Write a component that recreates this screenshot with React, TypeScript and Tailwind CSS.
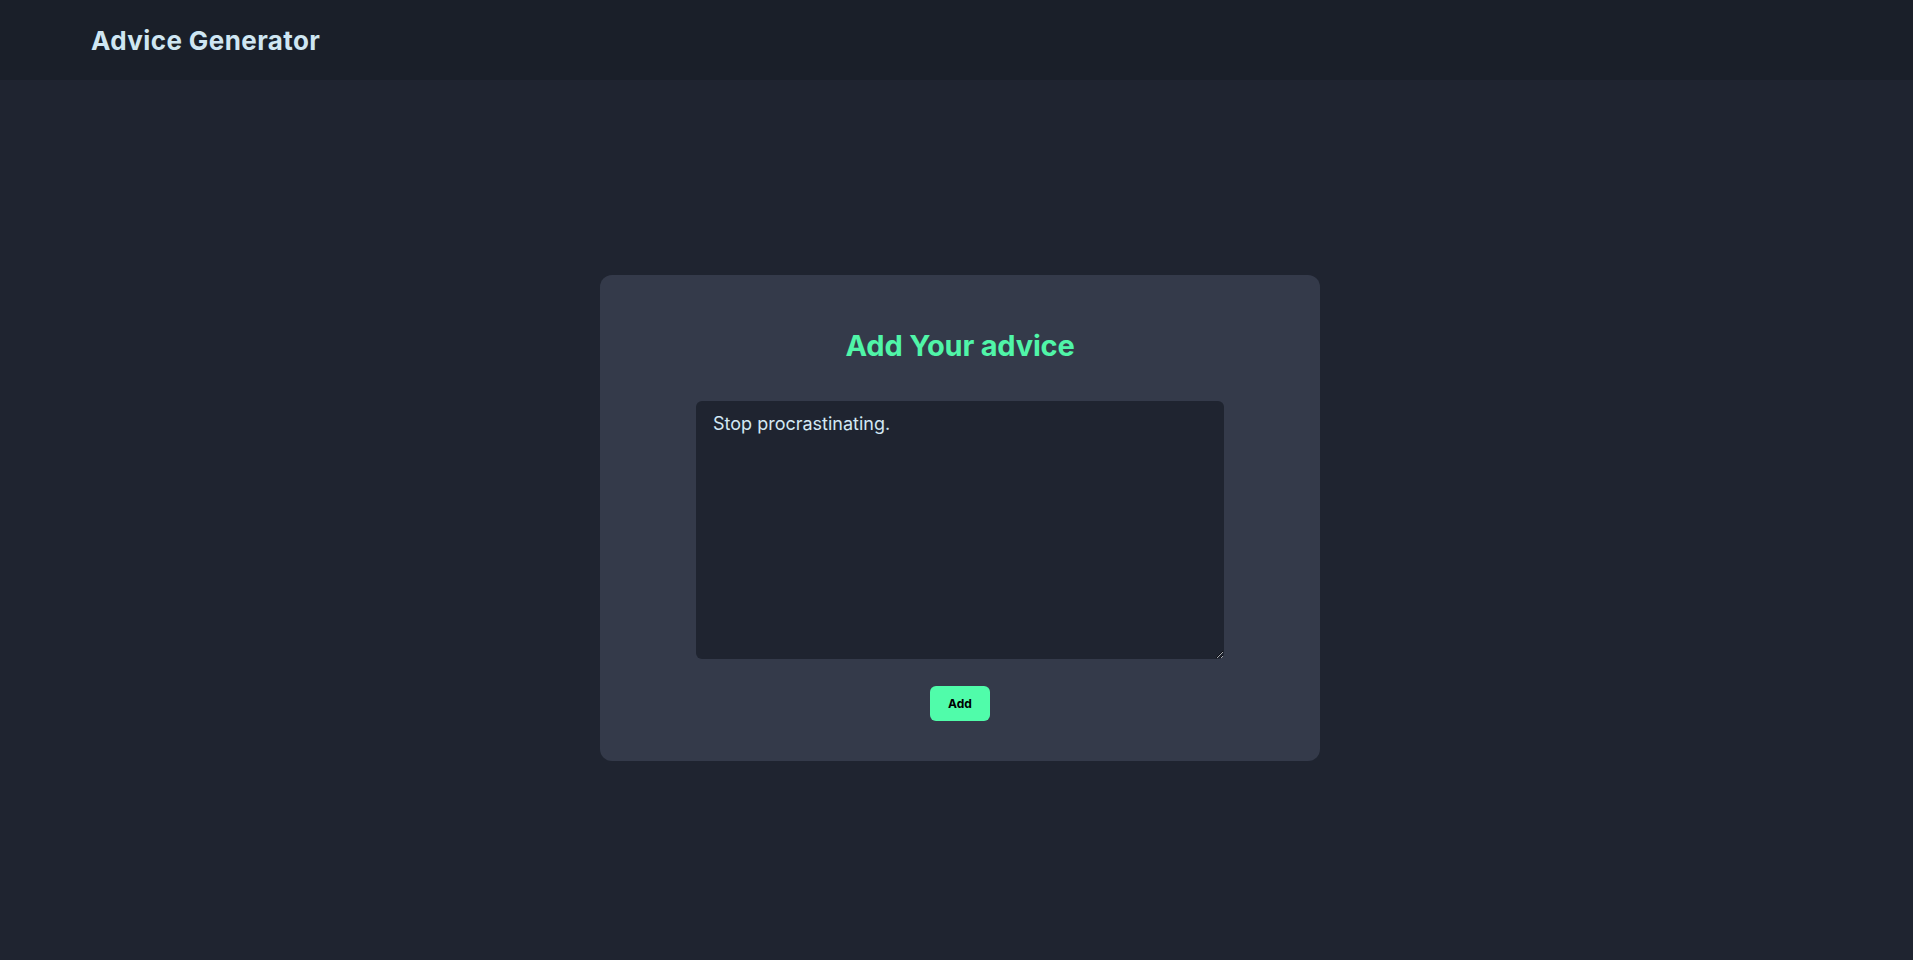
import React, { useState } from "react";

export default function App() {
  const [text, setText] = useState("Stop procrastinating.");
  return (
    <div
      className="min-h-screen w-full bg-[#1f2430]"
      style={{ fontFamily: "Inter, 'Noto Sans', sans-serif" }}
    >
      <header className="h-20 bg-[#1a1f29] flex items-center pl-[91px]">
        <h1 className="text-[26px] font-bold text-[#cfe6f2] tracking-[0.4px]">Advice Generator</h1>
      </header>
      <main className="h-[876px] flex items-center justify-center pl-[7px]">
        <div className="w-[720px] rounded-xl bg-[#343a4a] flex flex-col items-center pt-[53px] pb-[40px]">
          <h2 className="text-[29px] leading-9 font-bold text-[#50f5a8] tracking-[-0.2px]">Add Your advice</h2>
          <textarea
            value={text}
            onChange={(e) => setText(e.target.value)}
            className="mt-[37px] w-[528px] h-[258px] rounded-md bg-[#1f2430] text-[#d3e8f4] text-[18px] leading-7 px-[17px] pt-[9px] pb-[6px] outline-none border-0"
          />
          <button className="mt-[27px] w-[60px] h-[35px] rounded-md bg-[#50fcaa] text-black text-[12px] font-bold">
            Add
          </button>
        </div>
      </main>
    </div>
  );
}
